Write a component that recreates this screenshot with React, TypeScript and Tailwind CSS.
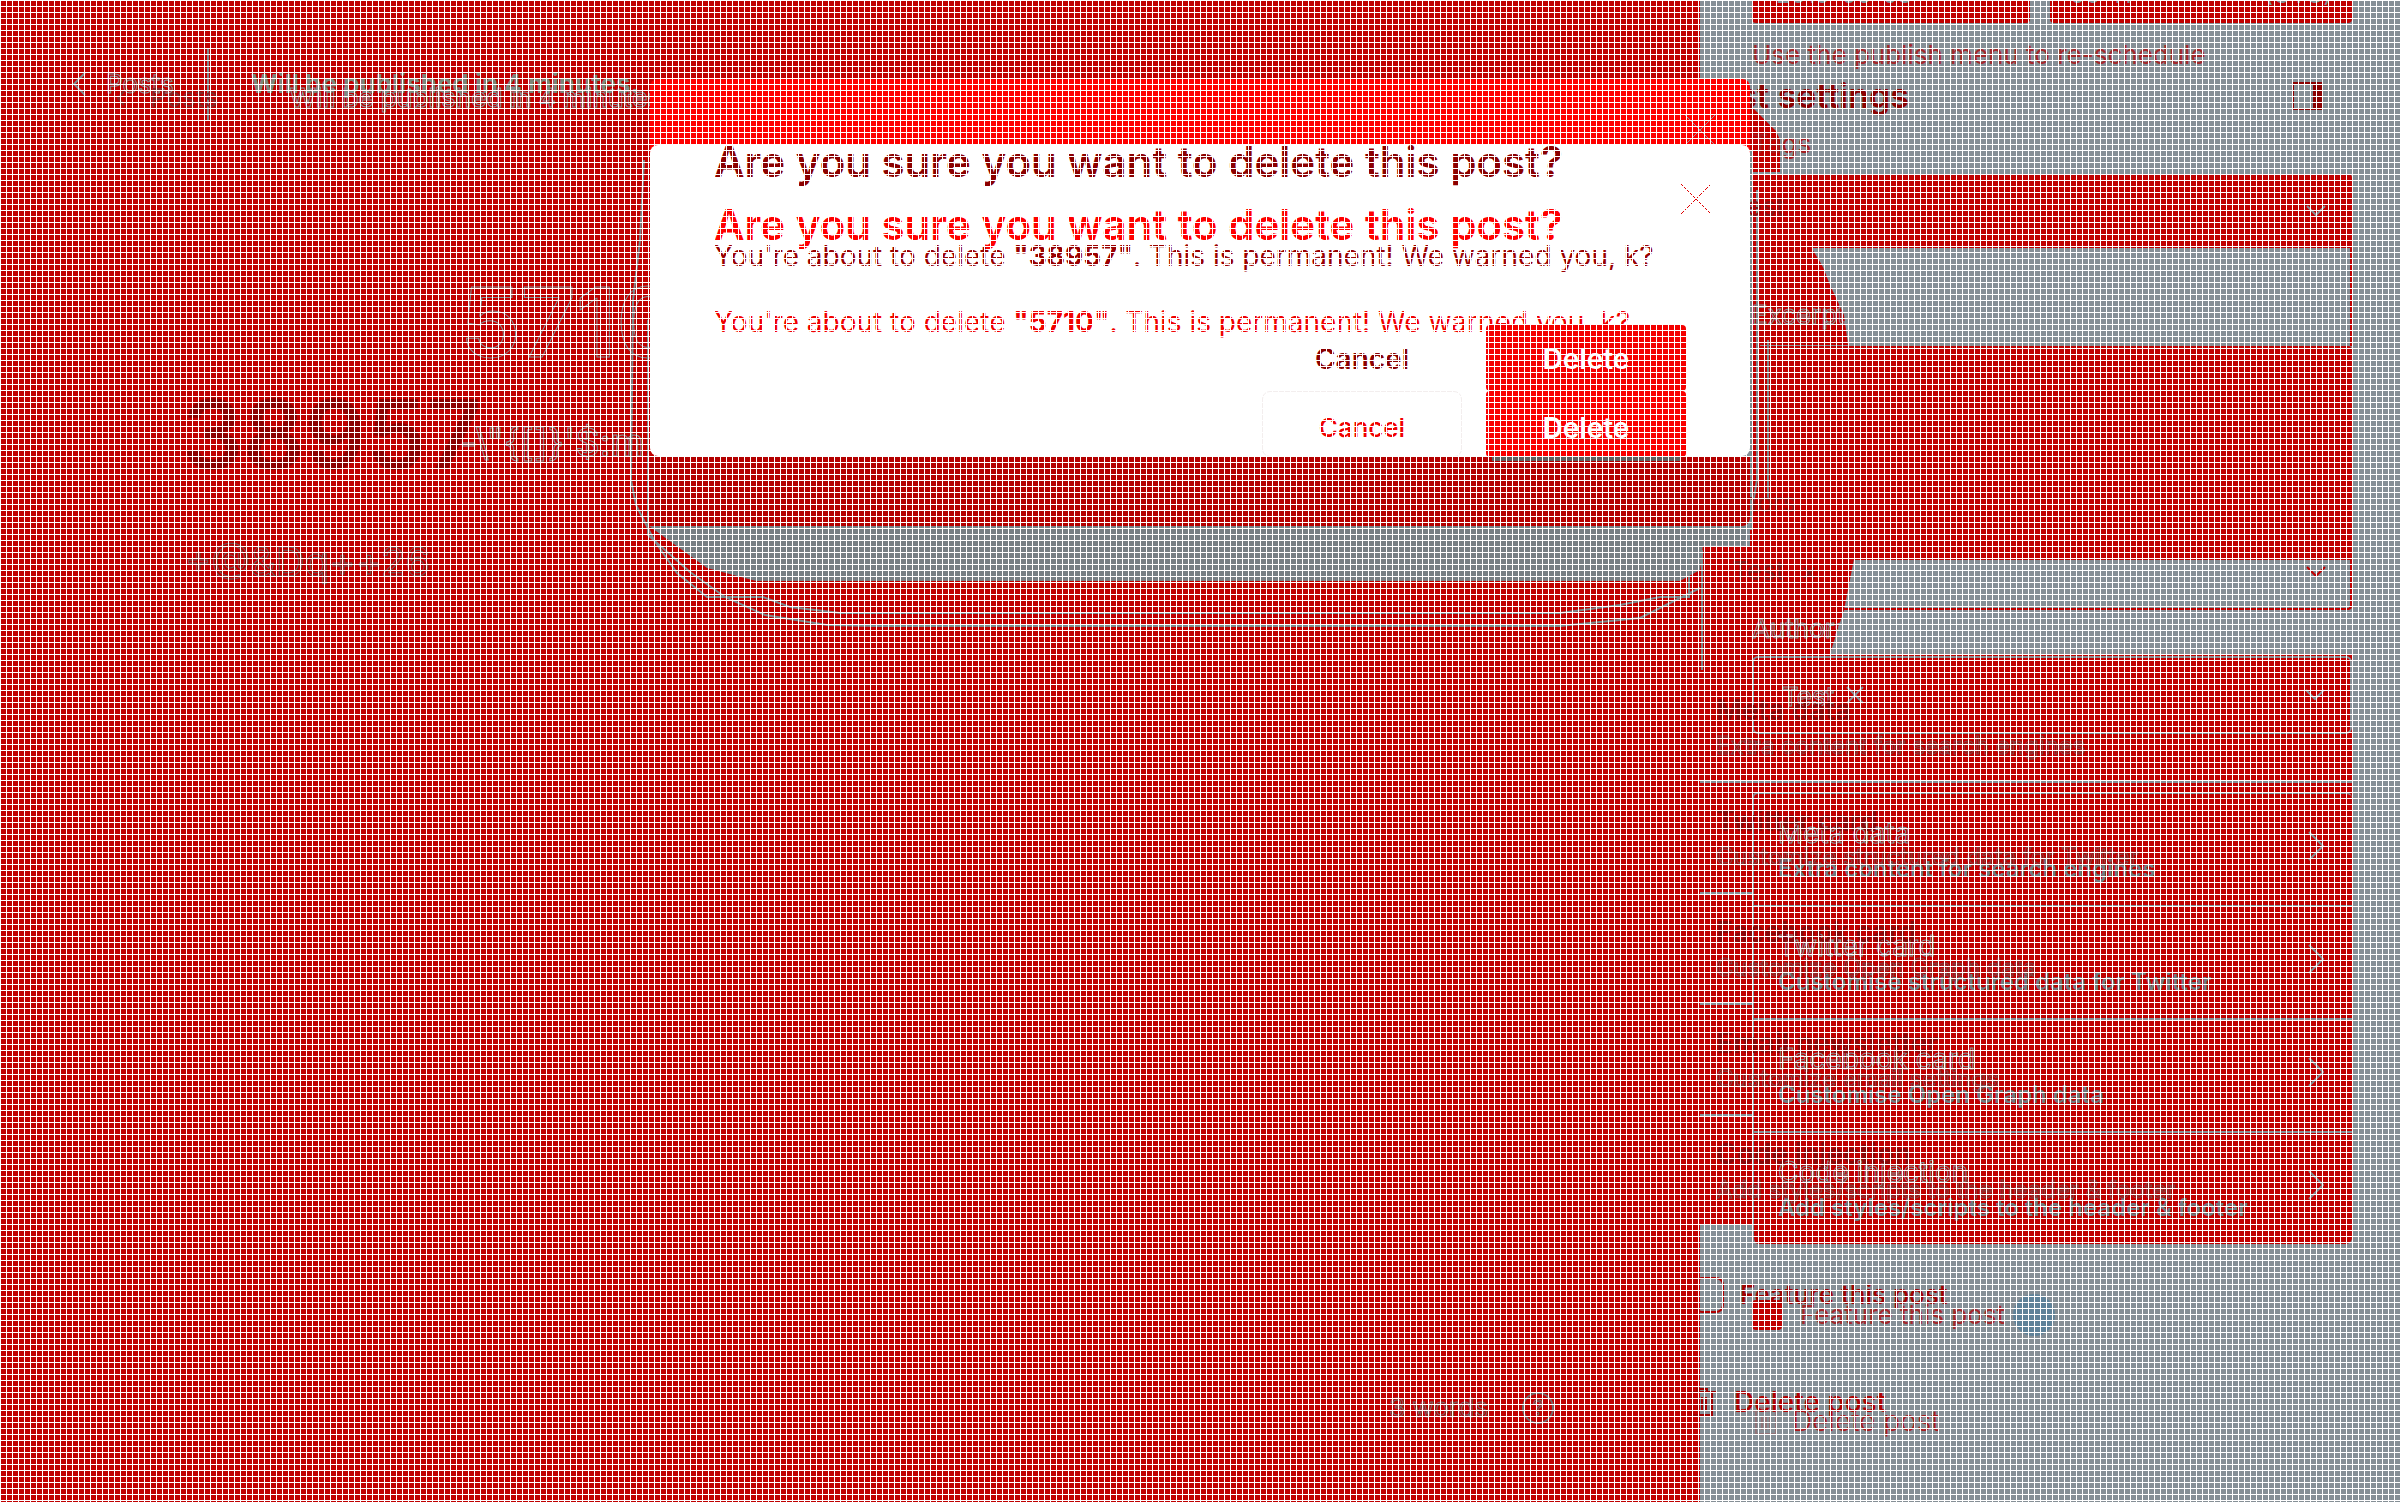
import React from "react";

const GHOST = "text-transparent [-webkit-text-stroke:1px_#879296]";

function Chevron({ className }: { className: string }) {
  return (
    <svg viewBox="0 0 20 12" className={`h-3 w-5 fill-none stroke-2 ${className}`} aria-hidden="true">
      <path d="M1 1l9 9 9-9" />
    </svg>
  );
}

function ChevronRight() {
  return (
    <svg viewBox="0 0 16 30" className="h-[30px] w-4 fill-none stroke-[#808b90] stroke-2" aria-hidden="true">
      <path d="M1 1l14 14L1 29" />
    </svg>
  );
}

function Cross({ className }: { className: string }) {
  return (
    <svg viewBox="0 0 32 32" className={`h-8 w-8 fill-none stroke-1 ${className}`} aria-hidden="true">
      <path d="M1 1l30 30M31 1L1 31" />
    </svg>
  );
}

function Trash({ className }: { className: string }) {
  return (
    <svg viewBox="0 0 28 28" className={`h-7 w-7 fill-none stroke-2 ${className}`} aria-hidden="true">
      <path d="M0 4h28M9 4V1h10v3M4 4v23h20V4M10 9v14M14 9v14M18 9v14" />
    </svg>
  );
}

const cards = [
  ["Meta data", "Extra content for search engines"],
  ["Twitter card", "Customise structured data for Twitter"],
  ["Facebook card", "Customise Open Graph data"],
  ["Code injection", "Add styles/scripts to the header & footer"],
];

const rows = [
  ["Meta data", "Extra content for search engines"],
  ["Twitter card", "Customize structured data for Twitter"],
  ["Facebook card", "Customize Open Graph data"],
  ["Email newsletter", "Customize email settings"],
  ["Code injection", "Add styles/scripts to the header & footer"],
];

function Editor() {
  return (
    <main className="relative min-w-0 flex-1">
      <header className="flex h-[168px] items-center pl-[72px]">
        <a href="#posts" className={`flex items-center gap-5 text-[26px] leading-8 ${GHOST}`}>
          <svg viewBox="0 0 14 24" className="h-6 w-3.5 fill-none stroke-[#808b90] stroke-2" aria-hidden="true">
            <path d="M13 1L2 12l11 11" />
          </svg>
          Posts
        </a>
        <span className="ml-[33px] h-[72px] w-0.5 bg-[#808b90]" />
        <span className="ml-[42px] text-[26px] font-bold leading-8 text-[#7b877b]">Will be published in 4 minutes.</span>
      </header>
      <div className="pl-[460px] pt-[94px]">
        <h1 className={`text-[96px] font-semibold leading-[120px] ${GHOST}`}>5710</h1>
        <p className={`pt-[36px] text-[38px] leading-[48px] ${GHOST}`}>{"-\\\"{[]}'$:m"}</p>
      </div>
    </main>
  );
}

function EditorRevision() {
  return (
    <div className="absolute inset-0">
      <div className="flex h-[196px] items-center pl-[116px] text-[26px] leading-8">
        <a href="#back" className="flex items-center gap-6 text-[#84282a]">
          <svg viewBox="0 0 10 16" className="h-4 w-2.5 fill-none stroke-[#84282a] stroke-2" aria-hidden="true">
            <path d="M8 1L2 8l6 7" />
          </svg>
          Posts
        </a>
        <span className={`ml-[72px] font-medium ${GHOST}`}>Will be published in 4 minutes</span>
      </div>
      <h2 className="pl-[182px] pt-[178px] text-[96px] font-semibold leading-[120px] text-[#8b0000]">38957</h2>
      <p className="pl-[185px] pt-[44px] text-[40px] leading-[48px] text-transparent [-webkit-text-stroke:1px_#6d5759]">{"+@&Dq++26"}</p>
    </div>
  );
}

function SidebarBackdrop() {
  return (
    <div className="absolute inset-y-0 left-0 right-12 -z-10" aria-hidden="true">
      <svg viewBox="1700 0 160 660" className="absolute left-0 top-0 h-[660px] w-40">
        <path
          d="M1750 105L1765 120 1776 131 1780 140V172H1750zM1750 247H1811L1823 267 1830 285 1837 300 1844 315 1848 345H1750zM1700 546V660H1828L1844 610 1854 559V546zM1750 345H1760V546H1750z"
          fill="#c00000"
        />
      </svg>
      <div className="absolute inset-x-0 top-[655px] bg-[#c00000] pt-[17px]">
        {rows.map(([title]) => (
          <div key={title} className="h-[111px] border-b-2 border-[#868f96]" />
        ))}
      </div>
    </div>
  );
}

function Sidebar() {
  return (
    <aside className="relative isolate flex w-[700px] flex-col bg-[#868f96] pl-[52px] pr-12 text-[26px] leading-[30px]">
      <SidebarBackdrop />
      <div className="flex gap-5 text-2xl leading-[30px]">
        <div className="h-[23px] w-[278px] overflow-hidden rounded-b bg-[#c00000] pl-6">
          <span className="-mt-5 block text-[#868f96]">2019-06-03</span>
        </div>
        <div className="h-[23px] flex-1 overflow-hidden rounded-b bg-[#c00000] px-5">
          <span className="-mt-5 flex justify-between text-[#868f96]"><span>06:41</span><span>(UTC)</span></span>
        </div>
      </div>
      <p className="pt-[17px] text-[#a4282b]">Use the publish menu to re-schedule</p>
      <label htmlFor="tags" className="pt-[59px] text-[#a51b1e]">Tags</label>
      <button id="tags" className="mt-[15px] flex h-[74px] items-center justify-end rounded-t bg-[#c00000] pr-[26px]">
        <Chevron className="stroke-[#868f96]" />
      </button>
      <div className="h-[98px] border-r-2 border-[#c00000] pt-[52px]">
        <label htmlFor="excerpt" className={GHOST}>Excerpt</label>
      </div>
      <textarea id="excerpt" className="h-[214px] resize-none rounded-t bg-[#c00000]" />
      <button className="flex h-[50px] items-start justify-end rounded-b border-b-2 border-r-2 border-[#c00000] pr-6 pt-1.5" aria-label="Toggle">
        <Chevron className="stroke-[#c00000]" />
      </button>
      <label htmlFor="authors" className={`pt-1 ${GHOST}`}>Authors</label>
      <button id="authors" className="mt-[12px] flex h-[78px] items-center rounded-md border-2 border-[#868f96] bg-[#c00000] pl-7 pr-[25px]">
        <span className={`pt-1 ${GHOST}`}>Test</span>
        <svg viewBox="0 0 18 18" className="ml-3 h-[18px] w-[18px] fill-none stroke-[#868f96] stroke-2" aria-hidden="true">
          <path d="M1 1l16 16M17 1L1 17" />
        </svg>
        <Chevron className="ml-auto stroke-[#868f96]" />
      </button>
      <ul className="mt-[58px] overflow-hidden rounded-md border-l-2 border-t-2 border-[#868f96] bg-[#c00000]">
        {cards.map(([title, text]) => (
          <li key={title} className="border-b-2 border-[#868f96] last:border-b-0">
            <button className="flex h-[111px] w-full items-center justify-between pb-2 pl-6 pr-[28px] text-left">
              <span className="pt-2.5">
                <span className={`block text-[28px] leading-9 ${GHOST}`}>{title}</span>
                <span className="block text-2xl font-semibold leading-9 text-[#6e7b80]">{text}</span>
              </span>
              <ChevronRight />
            </button>
          </li>
        ))}
      </ul>
      <label className="mt-[50px] flex items-center text-[#a4282b]">
        <input type="checkbox" className="h-[30px] w-[30px] appearance-none rounded bg-[#c00000]" />
        <span className="ml-[18px]">Feature this post</span>
        <span className="ml-2 h-[42px] w-[42px] rounded-full bg-[#5f8299]" />
      </label>
      <button className="mt-[70px] flex items-center text-[28px] font-light text-[#a81b1e]">
        <Trash className="mr-3 stroke-[#927478]" />
        Delete post
      </button>
    </aside>
  );
}

function SidebarRevision() {
  return (
    <div className="absolute inset-y-0 right-12 w-[652px] text-[26px] leading-[30px]">
      <div className="flex h-[192px] items-center justify-between pr-[30px]">
        <h2 className="-ml-1 text-[34px] font-semibold leading-10 text-[#8b0000]">Post settings</h2>
        <svg viewBox="0 0 30 28" className="h-7 w-[30px] fill-none stroke-[#8b0000] stroke-2" aria-hidden="true">
          <path d="M1 1h28v26H1z" />
          <path d="M22 1h7v26h-7z" fill="#8b0000" />
        </svg>
      </div>
      <p className="pl-8 text-[#8b1214]">Test</p>
      <p className="pt-[266px] text-[#8b1214]">Authors</p>
      <p className="flex gap-4 pl-8 pt-[38px] text-[#84191b]"><span>Test</span><span>×</span></p>
      <ul className="mt-[86px]">
        {rows.map(([title, text]) => (
          <li key={title} className="h-[111px] pl-4 pt-5">
            <span className="block text-[28px] font-semibold leading-9 text-[#86090b]">{title}</span>
            <span className="block text-2xl leading-9 text-transparent [-webkit-text-stroke:1px_#7f4244]">{text}</span>
          </li>
        ))}
      </ul>
      <label className="-ml-1.5 mt-[50px] flex items-center gap-4 font-medium text-[#a00000]">
        <input type="checkbox" className="h-9 w-[30px] appearance-none rounded-lg border-2 border-[#b00000]" />
        Feature this post
      </label>
      <button className="-ml-3 mt-[74px] flex items-center gap-[18px] text-[28px] font-medium text-[#b00000]">
        <Trash className="stroke-[#a00000]" />
        Delete post
      </button>
    </div>
  );
}

function ShadowContours() {
  return (
    <svg viewBox="600 60 1300 620" className="absolute left-1/2 top-[60px] -ml-[600px] h-[620px] w-[1300px] fill-none" aria-hidden="true">
      <path d="M649 526H1748L1744 545H1703L1700 570 1680 581H756L707 568 689 555z" fill="#777f84" />
      <g stroke="#7c888c" strokeWidth="2">
        <path d="M644 160L640 240 633 300 631 480 636 505 654 540 677 573 707 597H763L790 607 840 613H1560L1620 605 1660 597H1690" />
        <path d="M648 320V535L690 572 725 597 765 615 827 625 875 626H1560L1640 618 1700 588" />
        <path d="M1751 150V530M1757 190V480L1752 510 1744 530M1768 340V500M1702 550V670M1689 535V598" />
      </g>
    </svg>
  );
}

function DeleteDialog() {
  return (
    <section role="dialog" aria-label="Delete post" className="absolute inset-x-0 top-[79px] mx-auto w-[1100px]">
      <div className="flex h-[76px] justify-end rounded-t-lg bg-[#ff0000] pr-[34px] pt-[35px]">
        <Cross className="stroke-[#a09095]" />
      </div>
      <div className="relative -mt-2.5 flow-root h-[311px] rounded-lg bg-white">
        <div className="-mt-[15px] pl-16 text-[42px] font-semibold leading-[63px]">
          <h2 className="text-[#8b0000]">Are you sure you want to delete this post?</h2>
          <p className="text-[#ff0000]">Are you sure you want to delete this post?</p>
        </div>
        <button className="absolute right-[38px] top-[38px]" aria-label="Close">
          <Cross className="stroke-[#e00000]" />
        </button>
      </div>
      <div className="h-[70px] rounded-b-lg bg-[#b40000]" />
      <div className="absolute inset-x-0 top-[144px] pl-16 text-[28px] leading-[66px]">
        <p className="text-[#9a0000]">You're about to delete <b>"38957"</b>. This is permanent! We warned you, k?</p>
        <p className="text-[#f00000]">You're about to delete <b>"5710"</b>. This is permanent! We warned you, k?</p>
      </div>
      <div className="absolute right-16 top-[246px] grid grid-cols-[200px_200px] gap-x-6 text-[28px] font-semibold leading-8">
        <button className="h-[66px] pt-0.5 text-[#8b0000]">Cancel</button>
        <button className="h-[66px] rounded bg-[#f40000] pt-0.5 text-white">Delete</button>
        <button className="h-[66px] rounded-lg border border-[#f3eeee] pt-2 text-[26px] font-medium text-[#f00000]">Cancel</button>
        <button className="h-[66px] rounded bg-[#fa0000] pt-2 text-white">Delete</button>
      </div>
      <div className="absolute right-[70px] top-[378px] h-1 w-[188px] bg-[#5f5f5f]" />
    </section>
  );
}

export default function App() {
  return (
    <div className="relative flex min-h-screen overflow-hidden bg-[#c00000] font-['Inter',sans-serif]">
      <Editor />
      <Sidebar />
      <EditorRevision />
      <ShadowContours />
      <SidebarRevision />
      <footer className="absolute bottom-[78px] right-[846px] flex items-center gap-[34px] text-[26px] leading-8 text-transparent [-webkit-text-stroke:1px_#75686a]">
        <span>3 words</span>
        <span className="flex h-8 w-8 items-center justify-center rounded-full border-2 border-[#75686a] text-xl">?</span>
      </footer>
      <DeleteDialog />
      <div className="pointer-events-none absolute inset-0 bg-[linear-gradient(to_right,white_1px,transparent_1px),linear-gradient(to_bottom,white_1px,transparent_1px)] bg-[size:6px_6px]" />
    </div>
  );
}
